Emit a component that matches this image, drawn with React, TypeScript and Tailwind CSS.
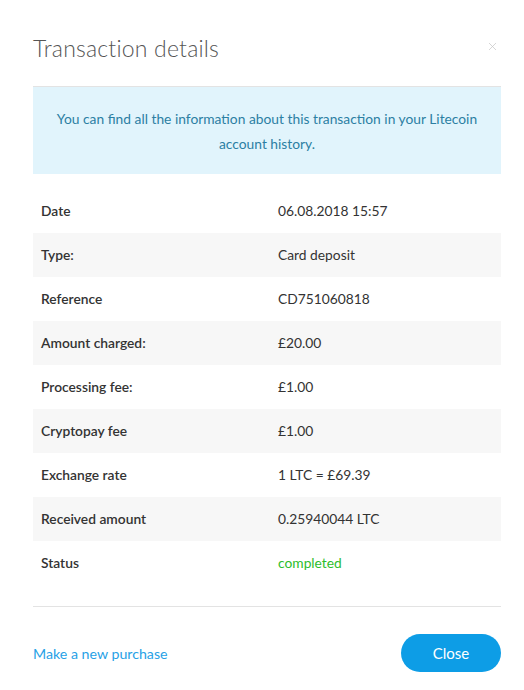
import { X } from "lucide-react";

const rows: [string, string, boolean?][] = [
  ["Date", "06.08.2018 15:57"],
  ["Type:", "Card deposit"],
  ["Reference", "CD751060818"],
  ["Amount charged:", "£20.00"],
  ["Processing fee:", "£1.00"],
  ["Cryptopay fee", "£1.00"],
  ["Exchange rate", "1 LTC = £69.39"],
  ["Received amount", "0.25940044 LTC"],
  ["Status", "completed", true],
];

export default function App() {
  return (
    <div className="w-[524px] h-[690px] bg-white font-['Lato',sans-serif] text-[#333]">
      <div className="pl-[33px] pr-[23px] pt-[33px]">
        <div className="flex items-center justify-between h-[30px]">
          <h1 className="text-[23px] font-light text-[#555] tracking-[0.2px]">Transaction details</h1>
          <X className="w-[13px] h-[13px] text-[#c4c4c4] mr-[2px] -mt-[4px]" strokeWidth={1.3} />
        </div>
        <div className="mt-[23px] border-t border-[#e3e3e3] bg-[#e1f4fc] h-[88px] flex items-center justify-center px-[12px]">
          <p className="text-center text-[13.8px] leading-[25px] text-[#2c7fa3]">
            You can find all the information about this transaction in your Litecoin account history.
          </p>
        </div>
        <div className="mt-[15px]">
          {rows.map(([label, value, green], i) => (
            <div
              key={label}
              className={`flex items-center h-[44px] pt-[1px] text-[13.8px] ${i % 2 === 1 ? "bg-[#f7f7f7]" : ""}`}
            >
              <div className="w-[245px] pl-[8px] font-semibold text-[#333]">{label}</div>
              <div className={green ? "text-[#2cbd2c]" : "text-[#333]"}>{value}</div>
            </div>
          ))}
        </div>
        <div className="mt-[21px] border-t border-[#e3e3e3]" />
        <div className="flex items-center justify-between mt-[27px]">
          <a className="text-[14.2px] text-[#27a1e6] pt-[2px]">Make a new purchase</a>
          <button className="w-[100px] h-[38px] rounded-full bg-[#0d9de6] text-white text-[15px]">Close</button>
        </div>
      </div>
    </div>
  );
}
